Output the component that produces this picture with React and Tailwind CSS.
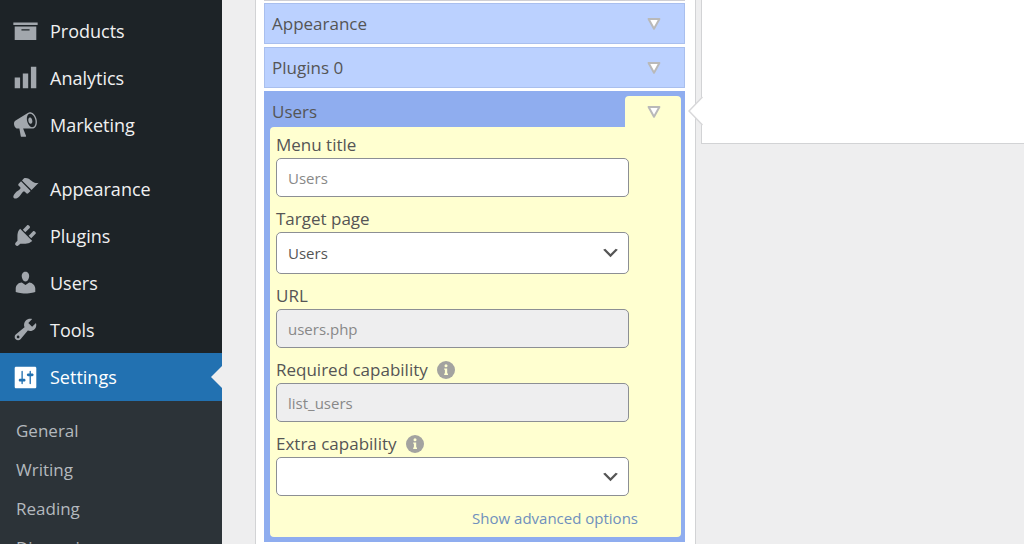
import React, { useState } from 'react'
import clsx from 'clsx'

const icons = {
  products: 'M19 4v2H1V4h18zM2 7h16v10H2V7zm11 3V9H7v1h6z',
  analytics: 'M18 18V2h-4v16h4zm-6 0V7H8v11h4zm-6 0v-8H2v8h4z',
  marketing:
    'M18.15 5.94c.46 1.62.38 3.22-.02 4.48-.42 1.28-1.26 2.18-2.3 2.48-.16.06-.26.06-.4.06-.06.02-.12.02-.18.02-.06.02-.14.02-.22.02h-6.8l2.22 5.5c.02.14-.06.26-.14.34-.08.1-.24.16-.34.16H6.95c-.1 0-.26-.06-.34-.16-.08-.08-.16-.2-.14-.34l-1-5.5H4.25l-.02-.02c-.5.06-1.08-.18-1.54-.62s-.88-1.08-1.06-1.88c-.24-.8-.2-1.56-.02-2.2.18-.62.58-1.08 1.06-1.3l.02-.02 9-5.4c.1-.06.18-.1.24-.16.06-.04.14-.08.24-.12.16-.08.28-.12.5-.18 1.04-.3 2.24.1 3.22.98s1.84 2.24 2.26 3.86zm-2.58 5.98h-.02c.4-.1.74-.34 1.04-.7.58-.7.86-1.76.86-3.04 0-.64-.1-1.3-.28-1.98-.34-1.36-1.02-2.5-1.78-3.24s-1.68-1.1-2.46-.88c-.82.22-1.4.96-1.7 2-.32 1.04-.28 2.36.06 3.72.38 1.36 1 2.5 1.8 3.24.78.74 1.62 1.1 2.48.88zm-2.54-7.08c.22-.04.42-.02.62.04.38.16.76.48 1.02 1s.42 1.2.42 1.78c0 .3-.04.56-.12.8-.18.48-.44.84-.86.94-.34.1-.8-.06-1.14-.4s-.64-.86-.78-1.5c-.18-.62-.12-1.24.02-1.72s.48-.84.82-.94z',
  appearance:
    'M14.48 11.06L7.41 3.99l1.5-1.5c.5-.56 2.3-.47 3.51.32 1.21.8 1.43 1.28 2.91 2.1 1.18.64 2.45 1.26 4.45.85zm-.71.71L6.7 4.7 4.93 6.47c-.39.39-.39 1.02 0 1.41l1.06 1.06c.39.39.39 1.03 0 1.42-.6.6-1.43 1.11-2.21 1.69-.35.26-.7.53-1.01.84C1.43 14.23.4 16.08 1.4 17.07c.99 1 2.84-.03 4.18-1.36.31-.31.58-.66.85-1.02.57-.78 1.08-1.61 1.69-2.21.39-.39 1.02-.39 1.41 0l1.06 1.06c.39.39 1.02.39 1.41 0z',
  plugins:
    'M13.11 4.36L9.87 7.6 8 5.73l3.24-3.24c.35-.34 1.05-.2 1.56.32.52.51.66 1.21.31 1.55zm-8 1.77l.91-1.12 9.01 9.01-1.19.84c-.71.71-2.63 1.16-3.82 1.16H6.14L4.9 17.26c-.59.59-1.54.59-2.12 0-.59-.58-.59-1.53 0-2.12l1.24-1.24v-3.88c0-1.13.4-3.19 1.09-3.89zm7.26 3.97l3.24-3.24c.34-.35 1.04-.21 1.55.31.52.51.66 1.21.31 1.55l-3.24 3.25z',
  users:
    'M10 9.25c-2.27 0-2.73-3.44-2.73-3.44C7 4.02 7.82 2 9.97 2c2.16 0 2.98 2.02 2.71 3.81 0 0-.41 3.44-2.68 3.44zm0 2.57L12.72 10c2.39 0 4.52 2.33 4.52 4.53v2.49s-3.65 1.13-7.24 1.13c-3.65 0-7.24-1.13-7.24-1.13v-2.49c0-2.25 1.94-4.48 4.47-4.48z',
  tools:
    'M16.68 9.77c-1.34 1.34-3.3 1.67-4.95.99l-5.41 6.52c-.99.99-2.59.99-3.58 0s-.99-2.59 0-3.57l6.52-5.42c-.68-1.65-.35-3.61.99-4.95 1.28-1.28 3.12-1.62 4.72-1.06l-2.89 2.89 2.82 2.82 2.86-2.87c.53 1.58.18 3.39-1.08 4.65zM3.81 16.21c.4.39 1.04.39 1.43 0 .4-.4.4-1.04 0-1.43-.39-.4-1.03-.4-1.43 0-.39.39-.39 1.03 0 1.43z',
  settings:
    'M18 17V3c0-.55-.45-1-1-1H3c-.55 0-1 .45-1 1v14c0 .55.45 1 1 1h14c.55 0 1-.45 1-1zM8 11h1c.55 0 1 .45 1 1s-.45 1-1 1H8v1.5c0 .28-.22.5-.5.5s-.5-.22-.5-.5V13H6c-.55 0-1-.45-1-1s.45-1 1-1h1V5.5c0-.28.22-.5.5-.5s.5.22.5.5V11zm5-2h-1c-.55 0-1-.45-1-1s.45-1 1-1h1V5.5c0-.28.22-.5.5-.5s.5.22.5.5V7h1c.55 0 1 .45 1 1s-.45 1-1 1h-1v5.5c0 .28-.22.5-.5.5s-.5-.22-.5-.5V9z'
}

const shopMenu = [
  { id: 'products', title: 'Products' },
  { id: 'analytics', title: 'Analytics' },
  { id: 'marketing', title: 'Marketing' }
]

const siteMenu = [
  { id: 'appearance', title: 'Appearance' },
  { id: 'plugins', title: 'Plugins' },
  { id: 'users', title: 'Users' },
  { id: 'tools', title: 'Tools' },
  { id: 'settings', title: 'Settings', current: true }
]

const settingsMenu = ['General', 'Writing', 'Reading', 'Discussion']

const MenuLink = ({ item }) => (
  <li>
    <a
      href={`#${item.id}`}
      className={clsx(
        'relative flex items-center pl-3 gap-[11px] text-lg leading-6',
        item.current ? 'h-12 bg-[#2271b1] text-white' : 'h-[47px] text-[#f0f0f1]'
      )}
    >
      <svg
        viewBox="0 0 20 20"
        className={clsx('size-[27px] shrink-0', item.current ? 'fill-white' : 'fill-[#a2a7ad]')}
        aria-hidden="true"
      >
        <path d={icons[item.id]} fillRule="evenodd" />
      </svg>
      {item.title}
      {item.current && (
        <span className="absolute right-0 top-1/2 -translate-y-1/2 border-y-[11px] border-r-[11px] border-y-transparent border-r-[#eeeeef]" />
      )}
    </a>
  </li>
)

const Sidebar = () => (
  <nav className="w-[222px] shrink-0 bg-[#1d2327] pt-[7px]" aria-label="Main menu">
    <ul>
      {shopMenu.map(item => <MenuLink key={item.id} item={item} />)}
    </ul>
    <ul className="mt-[17px]">
      {siteMenu.map(item => <MenuLink key={item.id} item={item} />)}
    </ul>
    <ul className="bg-[#2c3338] py-2.5">
      {settingsMenu.map(title => (
        <li key={title}>
          <a
            href={`#${title.toLowerCase()}`}
            className="flex h-[39px] items-center pl-4 text-[17px] text-[#b4b9be]"
          >
            {title}
          </a>
        </li>
      ))}
    </ul>
  </nav>
)

const Triangle = () => (
  <svg viewBox="0 0 14 14" className="size-3.5" aria-hidden="true">
    <path
      d="M1.6 2h10.8L7 11.800z"
      fill="#fff"
      stroke="#b9b9b9"
      strokeWidth="2"
      strokeLinejoin="round"
    />
  </svg>
)

const InfoIcon = () => (
  <svg viewBox="0 0 18 18" className="size-[18px]" aria-hidden="true">
    <circle cx="9" cy="9" r="9" fill="#a3a3a0" />
    <circle cx="9" cy="4.700" r="1.500" fill="#ffffd0" />
    <path d="M7.200 7.400h3v5.200h.8v1.400H7.200v-1.400h.7V8.800h-.7z" fill="#ffffd0" />
  </svg>
)

const MenuItem = ({ title }) => (
  <div className="flex h-[41px] items-center justify-between border border-[#a9bfee] bg-[#bbd1ff] pl-[7px] pr-[23px]">
    <span className="text-[17px]">{title}</span>
    <button type="button" aria-label={`Edit ${title}`}>
      <Triangle />
    </button>
  </div>
)

const controlClass = 'block w-full rounded-[5px] border border-[#8c8f94] pl-[11px] text-[15px] outline-none'

const Field = ({ id, label, info, children }) => (
  <div className="mb-2">
    <label htmlFor={id} className="flex h-[27px] items-center gap-[9px] text-[17px]">
      {label}
      {info && <InfoIcon />}
    </label>
    {children}
  </div>
)

const Select = ({ id, value, onChange, options, className }) => (
  <div className="relative">
    <select
      id={id}
      value={value}
      onChange={(e) => onChange(e.target.value)}
      className={clsx(controlClass, 'appearance-none bg-white pr-8', className)}
    >
      {options.map(option => (
        <option key={option} value={option}>{option}</option>
      ))}
    </select>
    <svg
      viewBox="0 0 20 20"
      className="pointer-events-none absolute right-2 top-1/2 size-[21px] -translate-y-1/2"
      aria-hidden="true"
    >
      <path d="M5 6l5 5 5-5 2 1-7 7-7-7 2-1z" fill="#555" />
    </svg>
  </div>
)

const UserItem = () => {
  const [title, setTitle] = useState('Users')
  const [target, setTarget] = useState('Users')
  const [extra, setExtra] = useState('')

  return (
    <section className="bg-[#8fadef] pb-[5px] pl-1.5 pr-1 pt-[5px]">
      <div className="flex items-stretch justify-between">
        <h2 className="flex h-[31px] items-center pl-0.5 text-[17px]">Users</h2>
        <button
          type="button"
          aria-label="Close Users"
          className="flex w-14 items-center justify-center rounded-t bg-[#ffffd0] pl-0.5"
        >
          <Triangle />
        </button>
      </div>
      <div className="rounded-b-sm rounded-tl-sm bg-[#ffffd0] pb-[7px] pl-1.5 pt-1">
        <div className="pr-[52px]">
          <Field id="menu-title" label="Menu title">
            <input
              id="menu-title"
              value={title}
              onChange={(e) => setTitle(e.target.value)}
              className={clsx(controlClass, 'h-[39px] bg-white text-[#888]')}
            />
          </Field>
          <Field id="target-page" label="Target page">
            <Select
              id="target-page"
              value={target}
              onChange={setTarget}
              options={['Users', 'Profile']}
              className="h-[42px]"
            />
          </Field>
          <Field id="url" label="URL">
            <input
              id="url"
              readOnly
              value="users.php"
              className={clsx(controlClass, 'h-[39px] bg-[#eeeeef] text-[#888]')}
            />
          </Field>
          <Field id="required-capability" label="Required capability" info>
            <input
              id="required-capability"
              readOnly
              value="list_users"
              className={clsx(controlClass, 'h-[39px] bg-[#eeeeef] text-[#888]')}
            />
          </Field>
          <Field id="extra-capability" label="Extra capability" info>
            <Select
              id="extra-capability"
              value={extra}
              onChange={setExtra}
              options={['', 'manage_options']}
              className="h-[39px]"
            />
          </Field>
        </div>
        <div className="flex justify-end pr-[43px] pt-0.5">
          <a href="#advanced" className="text-[15px] leading-6 text-[#6f90bd]">
            Show advanced options
          </a>
        </div>
      </div>
    </section>
  )
}

const App = () => (
  <div className="flex h-screen overflow-hidden bg-[#eeeeef] font-['Open_Sans',sans-serif] text-[#555]">
    <Sidebar />
    <main className="flex min-w-0 flex-1 items-start pl-[33px]">
      <div className="min-h-screen w-[441px] shrink-0 border-x border-[#d2d3d5] bg-white pl-2 pr-[10px]">
        <div className="h-px bg-[#cfcfd4]" />
        <div className="flex flex-col gap-[3px] pt-0.5">
          <MenuItem title="Appearance" />
          <MenuItem title="Plugins 0" />
          <UserItem />
        </div>
      </div>
      <aside className="relative ml-[5px] h-36 min-w-0 flex-1 border-b border-l border-[#d2d3d5] bg-white">
        {/* pointer towards the open menu item */}
        <svg
          viewBox="0 0 15 30"
          className="absolute -left-[14px] top-24 h-[30px] w-[15px]"
          aria-hidden="true"
        >
          <path d="M15 0.500L1 15l14 14.500z" fill="#fff" />
          <path d="M14.500 1L1 15l13.500 14" fill="none" stroke="#d8d8da" strokeWidth="1.500" />
        </svg>
      </aside>
    </main>
  </div>
)

export default App
